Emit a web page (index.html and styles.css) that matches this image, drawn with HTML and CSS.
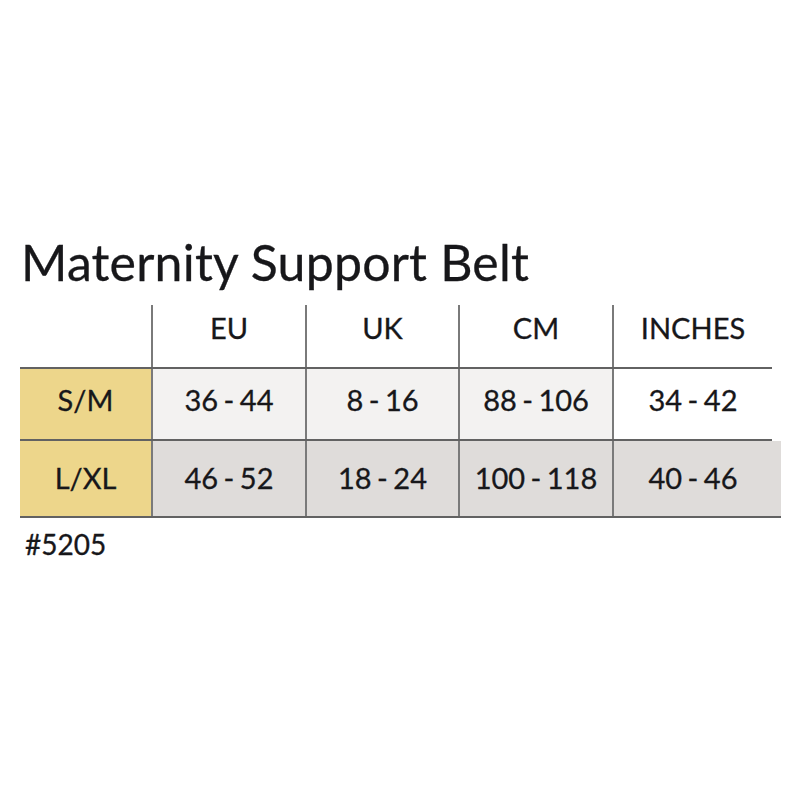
FILE: index.html
```html
<!DOCTYPE html>
<html>
<head>
<meta charset="utf-8">
<link rel="stylesheet" href="styles.css">
</head>
<body>
<div class="sheet">
  <h1 class="title">Maternity Support Belt</h1>
  <div class="chart">
    <div class="row head">
      <div class="cell c0"></div>
      <div class="cell c1">EU</div>
      <div class="cell c2">UK</div>
      <div class="cell c3">CM</div>
      <div class="cell c4">INCHES</div>
    </div>
    <div class="row r1">
      <div class="cell c0 size">S/M</div>
      <div class="cell c1">36 - 44</div>
      <div class="cell c2">8 - 16</div>
      <div class="cell c3">88 - 106</div>
      <div class="cell c4 plain">34 - 42</div>
    </div>
    <div class="row r2">
      <div class="cell c0 size">L/XL</div>
      <div class="cell c1">46 - 52</div>
      <div class="cell c2">18 - 24</div>
      <div class="cell c3">100 - 118</div>
      <div class="cell c4">40 - 46</div>
    </div>
  </div>
  <div class="code">#5205</div>
</div>
</body>
</html>
```

FILE: styles.css
```css
html, body {
  margin: 0;
  padding: 0;
  background: #ffffff;
}

.sheet {
  padding: 237px 0 0 20px;
  font-family: Lato, "Open Sans", sans-serif;
  color: #17171a;
  -webkit-text-stroke: 0.3px #17171a;
}

.title {
  margin: 0 0 18px 1px;
  font-size: 50px;
  line-height: 1;
  font-weight: 400;
  height: 50px;
  letter-spacing: 0.2px;
}

.chart {
  display: flex;
  flex-direction: column;
  align-items: flex-start;
}

.row {
  display: flex;
  border-bottom: 2px solid #626262;
  font-size: 29px;
  line-height: 1;
  word-spacing: -2px;
}

.cell {
  display: flex;
  justify-content: center;
  align-items: center;
  box-sizing: border-box;
  border-left: 2px solid #7a7a7a;
}

.c0 { width: 131px; border-left: none; }
.c1 { width: 154px; }
.c2 { width: 153px; }
.c3 { width: 154px; }
.c4 { width: 160px; }

.head .cell {
  height: 62px;
  align-items: flex-start;
  padding-top: 8px;
}

.r1 .cell {
  height: 70px;
  padding-bottom: 10px;
  background: #f3f2f1;
}

.r1 .plain {
  background: #ffffff;
}

.r2 {
  padding-right: 9px;
  background: #dfdcda;
}

.r2 .cell {
  height: 75px;
  padding-bottom: 2px;
  background: #dfdcda;
}

.row .size {
  background: #edd68b;
}

.code {
  margin: 12px 0 0 5px;
  font-size: 28px;
  line-height: 1;
}
```
